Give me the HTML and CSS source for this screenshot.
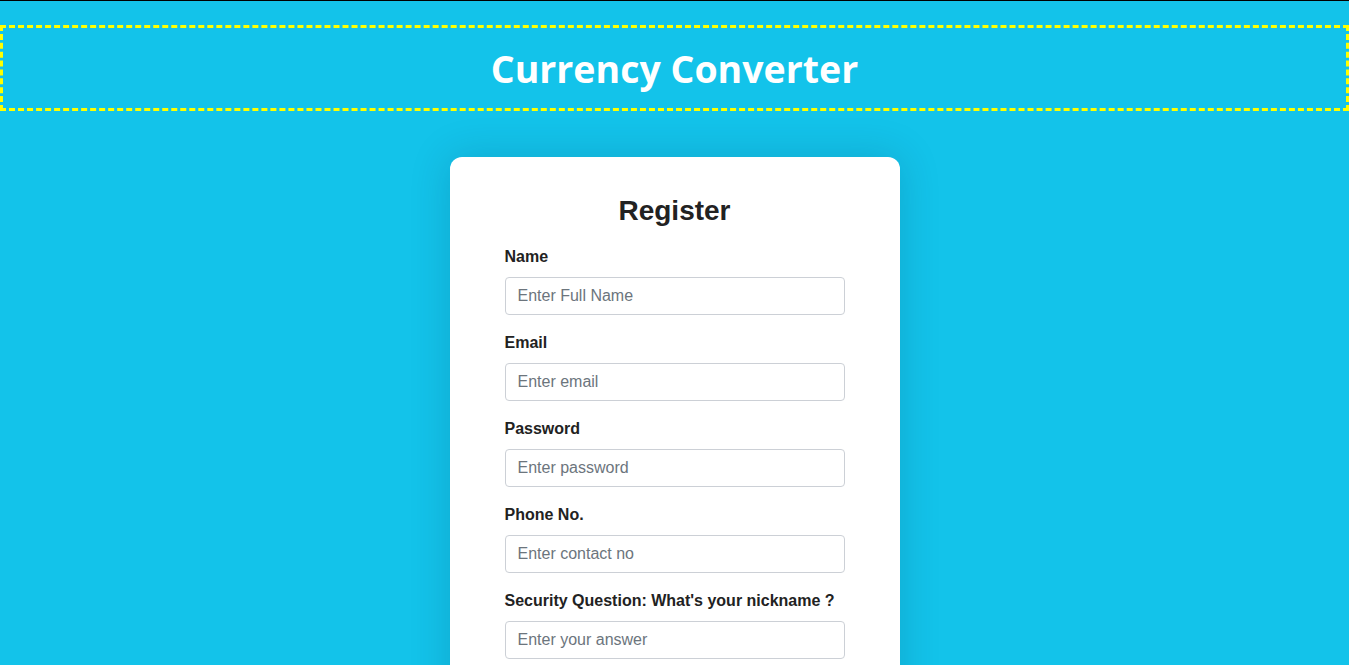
FILE: index.html
```html
<!DOCTYPE html>
<html lang="en">
<head>
<meta charset="utf-8">
<title>Currency Converter</title>
<link rel="stylesheet" href="styles.css">
</head>
<body>
<header class="site-header">
  <h1 class="site-title">Currency Converter</h1>
</header>
<main class="page">
  <form class="card">
    <h2 class="card-title">Register</h2>
    <div class="field">
      <label class="field-label" for="name">Name</label>
      <input class="field-input" id="name" type="text" placeholder="Enter Full Name">
    </div>
    <div class="field">
      <label class="field-label" for="email">Email</label>
      <input class="field-input" id="email" type="email" placeholder="Enter email">
    </div>
    <div class="field">
      <label class="field-label" for="password">Password</label>
      <input class="field-input" id="password" type="password" placeholder="Enter password">
    </div>
    <div class="field">
      <label class="field-label" for="phone">Phone No.</label>
      <input class="field-input" id="phone" type="text" placeholder="Enter contact no">
    </div>
    <div class="field">
      <label class="field-label" for="answer">Security Question: What's your nickname ?</label>
      <input class="field-input" id="answer" type="text" placeholder="Enter your answer">
    </div>
    <div class="field">
      <button class="submit" type="submit">Register</button>
    </div>
  </form>
</main>
</body>
</html>
```

FILE: styles.css
```css
html, body {
  margin: 0;
  padding: 0;
}

body {
  background: #13c3ea;
  border-top: 1px solid #000;
  font-family: "Liberation Sans", Arial, sans-serif;
  color: #222;
  min-height: 100vh;
  box-sizing: border-box;
}

.site-header {
  margin-top: 24px;
  height: 80px;
  border: 3px dashed #ffff00;
  display: flex;
  align-items: center;
  justify-content: center;
}

.site-title {
  margin: 2px 0 0;
  color: #fff;
  font-family: "Open Sans", "Noto Sans", sans-serif;
  font-weight: 700;
  font-size: 37.5px;
  line-height: 1;
}

.page {
  display: flex;
  justify-content: center;
  padding-top: 46px;
}

.card {
  width: 340px;
  background: #fff;
  border-radius: 12px;
  padding: 38px 55px 40px;
  box-shadow: 0 0 40px rgba(0, 40, 70, 0.18);
}

.card-title {
  margin: 0 0 21px;
  text-align: center;
  font-size: 28px;
  font-weight: 700;
  color: #222;
  line-height: 32px;
}

.field {
  margin-bottom: 19px;
}

.field-label {
  display: block;
  font-size: 16px;
  line-height: 18px;
  font-weight: 700;
  color: #222;
  margin-bottom: 11px;
}

.field-input {
  display: block;
  box-sizing: border-box;
  width: 100%;
  height: 38px;
  padding: 0 12px;
  border: 1px solid #ccd0d6;
  border-radius: 4px;
  font-family: "Liberation Sans", Arial, sans-serif;
  font-size: 16px;
  color: #222;
  background: #fff;
}

.field-input::placeholder {
  color: #6c757d;
}

.submit {
  width: 100%;
  height: 40px;
  border: 0;
  border-radius: 4px;
  background: #13c3ea;
  color: #fff;
  font-size: 16px;
  font-weight: 700;
}
```
